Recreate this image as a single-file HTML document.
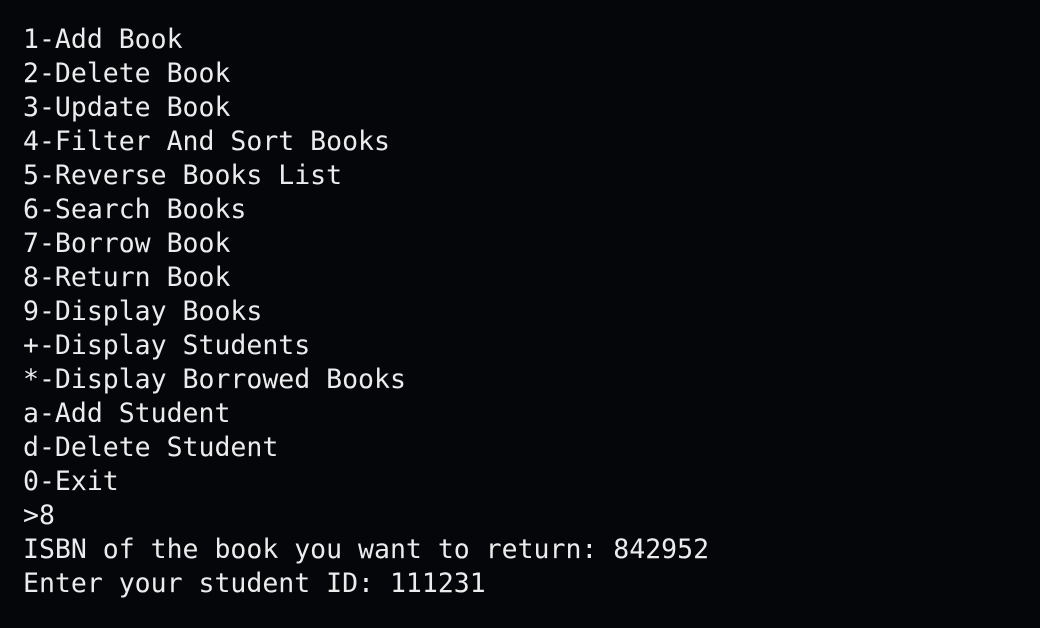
<!DOCTYPE html>
<html><head><meta charset="utf-8"><style>
html,body{margin:0;padding:0;background:#05060a;width:1040px;height:628px;overflow:hidden}
pre{margin:0;padding:23px 0 0 23px;font-family:"DejaVu Sans Mono","Liberation Mono",monospace;font-size:26.5px;line-height:34px;color:#ececec;white-space:pre}
</style></head><body><pre>1-Add Book
2-Delete Book
3-Update Book
4-Filter And Sort Books
5-Reverse Books List
6-Search Books
7-Borrow Book
8-Return Book
9-Display Books
+-Display Students
*-Display Borrowed Books
a-Add Student
d-Delete Student
0-Exit
&gt;8
ISBN of the book you want to return: 842952
Enter your student ID: 111231</pre></body></html>
